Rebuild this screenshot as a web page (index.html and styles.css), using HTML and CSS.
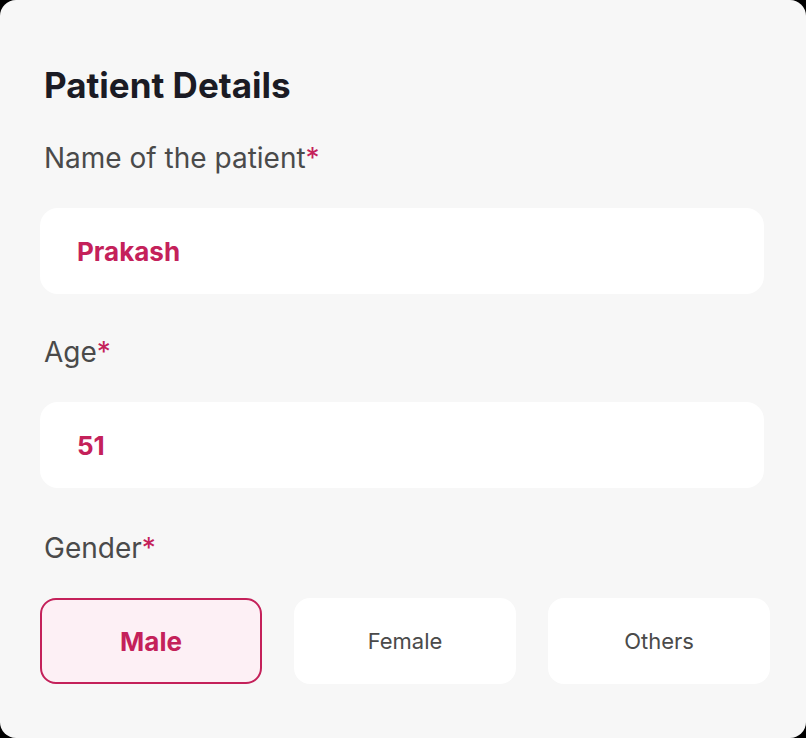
FILE: index.html
```html
<!DOCTYPE html>
<html lang="en">
<head>
<meta charset="utf-8">
<title>Patient Details</title>
<link rel="stylesheet" href="styles.css">
</head>
<body>
<main class="card">
  <h1 class="title">Patient Details</h1>
  <section class="field">
    <label class="label">Name of the patient<span class="req">*</span></label>
    <div class="input">Prakash</div>
  </section>
  <section class="field field-age">
    <label class="label">Age<span class="req">*</span></label>
    <div class="input">51</div>
  </section>
  <section class="field field-gender">
    <label class="label">Gender<span class="req">*</span></label>
    <div class="options">
      <button class="option selected">Male</button>
      <button class="option">Female</button>
      <button class="option">Others</button>
    </div>
  </section>
</main>
</body>
</html>
```
FILE: styles.css
```css
html, body {
  margin: 0;
  padding: 0;
  background: #000;
}
body {
  font-family: "Inter", "Lato", sans-serif;
}
.card {
  box-sizing: border-box;
  width: 806px;
  height: 738px;
  background: #f7f7f7;
  border-radius: 16px;
  padding: 65px 36px 0 40px;
  display: flex;
  flex-direction: column;
}
.title {
  margin: 0 0 0 4px;
  font-size: 35px;
  line-height: 40px;
  font-weight: 700;
  color: #1b1b24;
}
.field {
  display: flex;
  flex-direction: column;
  gap: 34px;
  margin-top: 37px;
}
.field-age {
  margin-top: 42px;
}
.field-gender {
  margin-top: 44px;
}
.label {
  margin-left: 4px;
  font-size: 28px;
  line-height: 32px;
  color: #4a4a4a;
}
.req {
  color: #c4215a;
}
.input {
  box-sizing: border-box;
  width: 724px;
  height: 86px;
  background: #fff;
  border-radius: 18px;
  padding-left: 37px;
  display: flex;
  align-items: center;
  font-size: 26px;
  font-weight: 700;
  color: #c4215a;
}
.options {
  display: flex;
  gap: 32px;
}
.option {
  box-sizing: border-box;
  width: 222px;
  height: 86px;
  background: #fff;
  border: 2px solid #fff;
  border-radius: 16px;
  font-family: inherit;
  font-size: 22px;
  color: #4a4a4a;
  padding: 0;
}
.option.selected {
  background: #fdf0f5;
  border-color: #c4215a;
  color: #c4215a;
  font-size: 26px;
  font-weight: 700;
}
```
